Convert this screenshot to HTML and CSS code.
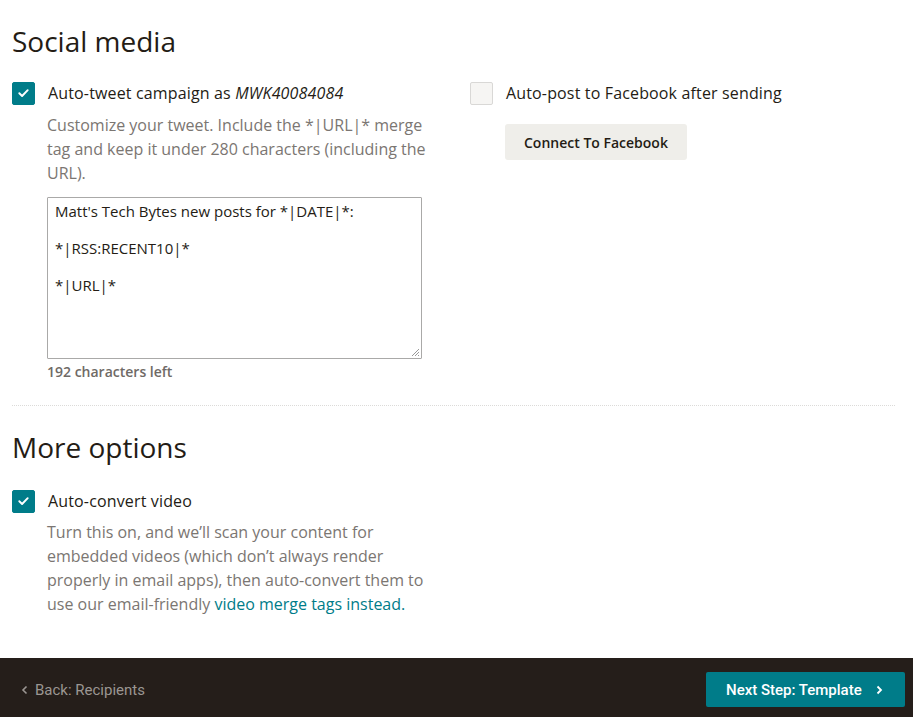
FILE: index.html
```html
<!DOCTYPE html>
<html lang="en">
<head>
<meta charset="utf-8">
<title>Social media settings</title>
<link rel="stylesheet" href="styles.css">
</head>
<body>
<main class="content">
  <section class="section">
    <h2 class="heading">Social media</h2>
    <div class="cols">
      <div class="col">
        <div class="check-row">
          <span class="box checked"><svg viewBox="0 0 24 24" width="24" height="24"><path d="M7.2 12.3l3.2 3.1 6.4-6.6" fill="none" stroke="#fff" stroke-width="2.2" stroke-linecap="round" stroke-linejoin="round"/></svg></span>
          <span class="label">Auto-tweet campaign as <em>MWK40084084</em></span>
        </div>
        <div class="indent">
          <p class="desc">Customize your tweet. Include the *|URL|* merge tag and keep it under 280 characters (including the URL).</p>
          <div class="textarea">
            <p>Matt's Tech Bytes new posts for *|DATE|*:</p>
            <p>*|RSS:RECENT10|*</p>
            <p>*|URL|*</p>
            <svg class="grip" viewBox="0 0 10 10" width="10" height="10"><path d="M9 2L2 9M9 5L5 9M9 8L8 9" stroke="#999" stroke-width="1"/></svg>
          </div>
          <div class="count">192 characters left</div>
        </div>
      </div>
      <div class="col">
        <div class="check-row">
          <span class="box"></span>
          <span class="label">Auto-post to Facebook after sending</span>
        </div>
        <div class="indent">
          <button class="btn-secondary">Connect To Facebook</button>
        </div>
      </div>
    </div>
  </section>
  <hr class="divider">
  <section class="section more">
    <h2 class="heading">More options</h2>
    <div class="check-row">
      <span class="box checked"><svg viewBox="0 0 24 24" width="24" height="24"><path d="M7.2 12.3l3.2 3.1 6.4-6.6" fill="none" stroke="#fff" stroke-width="2.2" stroke-linecap="round" stroke-linejoin="round"/></svg></span>
      <span class="label">Auto-convert video</span>
    </div>
    <div class="indent">
      <p class="desc narrow">Turn this on, and we’ll scan your content for embedded videos (which don’t always render properly in email apps), then auto-convert them to use our email-friendly <a href="#" class="link">video merge tags instead.</a></p>
    </div>
  </section>
</main>
<footer class="footer">
  <a href="#" class="back"><svg viewBox="0 0 10 10" width="10" height="10"><path d="M6.5 1.5L3 5l3.5 3.5" fill="none" stroke="currentColor" stroke-width="1.6"/></svg>Back: Recipients</a>
  <button class="btn-primary">Next Step: Template<svg viewBox="0 0 10 10" width="10" height="10"><path d="M3.5 1.5L7 5 3.5 8.5" fill="none" stroke="currentColor" stroke-width="1.8"/></svg></button>
</footer>
</body>
</html>
```

FILE: styles.css
```css
* { box-sizing: border-box; }
html, body { height: 100%; }
body {
  margin: 0;
  font-family: "Open Sans", "Liberation Sans", sans-serif;
  color: #241c15;
  background: #fff;
  display: flex;
  flex-direction: column;
  min-height: 100vh;
}
.content {
  flex: 1;
  padding: 21px 18px 0 12px;
}
.heading {
  margin: 0;
  font-weight: 400;
  font-size: 28px;
  line-height: 40px;
  color: #241c15;
}
.cols {
  display: grid;
  grid-template-columns: 458px 1fr;
  margin-top: 20px;
}
.check-row {
  display: flex;
  align-items: center;
  gap: 13px;
  height: 24px;
}
.box {
  width: 23px;
  height: 23px;
  border-radius: 2px;
  border: 1px solid #d9d8d6;
  background: #f6f5f3;
  display: flex;
  align-items: center;
  justify-content: center;
  flex: none;
}
.box.checked {
  background: #007c89;
  border-color: #007c89;
}
.box svg { width: 22px; height: 22px; }
.label {
  font-size: 16px;
  line-height: 24px;
  letter-spacing: 0.15px;
}
.indent { padding-left: 35px; }
.desc {
  margin: 8px 0 0;
  font-size: 16px;
  line-height: 24px;
  color: #7b7672;
  max-width: 395px;
}
.desc.narrow { max-width: 385px; }
.more .desc { margin-top: 7px; }
.link { color: #007c89; text-decoration: none; }
.textarea {
  position: relative;
  margin-top: 12px;
  width: 375px;
  height: 162px;
  border: 1px solid #aaa9a8;
  border-radius: 1px;
  padding: 4px 7px;
  font-size: 15px;
  line-height: 19px;
  color: #241c15;
}
.textarea p { margin: 0 0 18px; }
.grip { position: absolute; right: 1px; bottom: 1px; }
.count {
  margin-top: 3px;
  font-size: 14px;
  font-weight: 600;
  color: #6f6a66;
  line-height: 20px;
}
.btn-secondary {
  margin-top: 19px;
  height: 36px;
  padding: 0 19px;
  border: none;
  border-radius: 3px;
  background: #efeeea;
  color: #241c15;
  font-family: inherit;
  font-size: 14px;
  font-weight: 600;
}
.divider {
  border: none;
  border-top: 1px dotted #dcdbd9;
  margin: 23px 0 21px;
  width: 883px;
}
.more .check-row { margin-top: 22px; }
.footer {
  height: 59px;
  background: #251e1a;
  display: flex;
  align-items: flex-start;
  justify-content: space-between;
  padding: 14px 8px 0 20px;
  font-family: Roboto, "Liberation Sans", sans-serif;
}
.back {
  display: flex;
  align-items: center;
  gap: 5px;
  height: 35px;
  color: #9b9692;
  font-size: 15px;
  text-decoration: none;
}
.btn-primary {
  display: flex;
  align-items: center;
  gap: 12px;
  height: 35px;
  width: 199px;
  padding: 0 20px 0 20px;
  border: none;
  border-radius: 2px;
  background: #007c89;
  color: #fff;
  font-family: inherit;
  font-size: 15px;
  font-weight: 500;
}
```
